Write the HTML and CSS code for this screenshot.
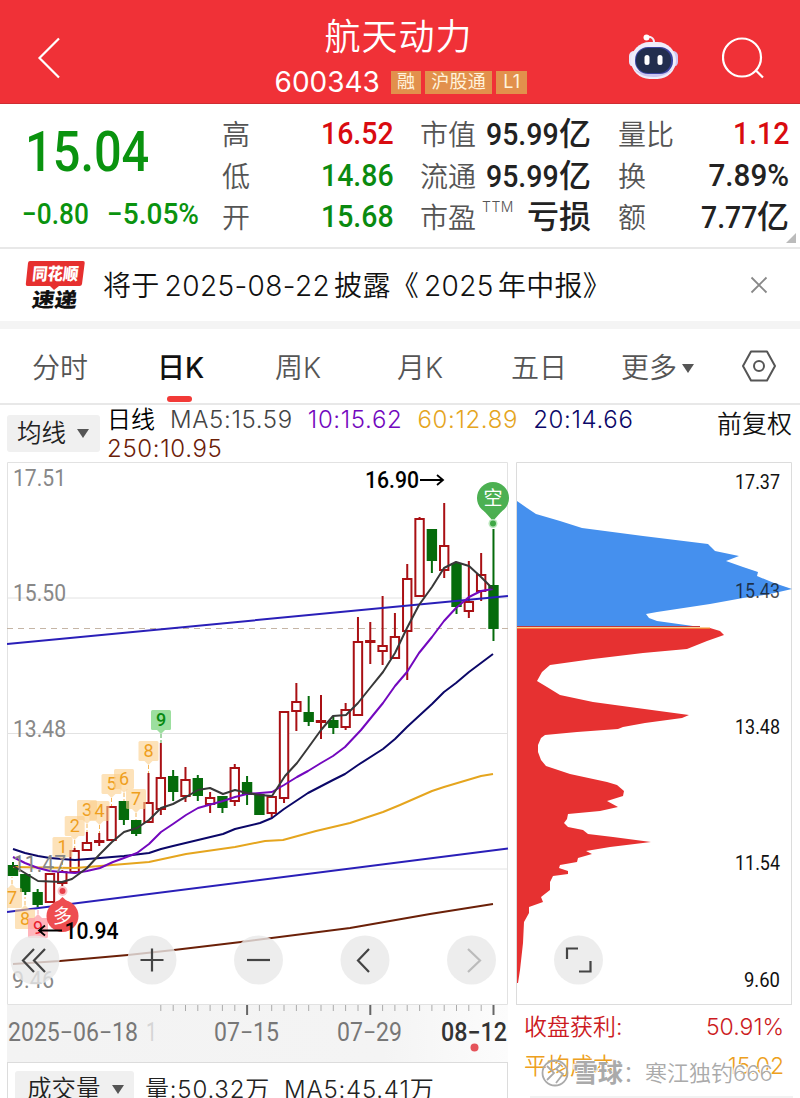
FILE: index.html
```html
<!DOCTYPE html>
<html lang="zh-CN">
<head>
<meta charset="utf-8">
<title>航天动力 600343</title>
<link rel="stylesheet" href="styles.css">
</head>
<body>
<header class="header">
<svg class="back" width="24" height="42" viewBox="0 0 24 42"><path d="M22 1.500L2.500 21L22 40.500"/></svg>
<div class="stock">
<h1>航天动力</h1>
<div class="code-row"><span class="code">600343</span><span class="tag">融</span><span class="tag">沪股通</span><span class="tag tag-l1">L1</span></div>
</div>
<div class="header-icons">
<svg width="50" height="46" viewBox="0 0 50 46">
<path d="M17 3.500C21 1.500 25 4 25 8" fill="none" stroke="#f3eefa" stroke-width="2"/>
<circle cx="17.500" cy="3.500" r="3" fill="#fff"/>
<rect x="0" y="17" width="10" height="16" rx="5" fill="#e9e5f8"/>
<rect x="39" y="17" width="10" height="16" rx="5" fill="#cfc6f3"/>
<rect x="2" y="8" width="45" height="37" rx="18.500" fill="#f0edfa"/>
<path d="M5 34C10 45 36 47 44 34C38 42 12 42 5 34Z" fill="#cdc5f0"/>
<rect x="6" y="13" width="38" height="27" rx="13" fill="#3c43a0"/>
<rect x="7" y="14" width="35" height="25" rx="12" fill="#222e4e"/>
<rect x="15.500" y="21" width="5" height="10" rx="2.500" fill="#fff"/>
<rect x="28.500" y="21" width="5" height="10" rx="2.500" fill="#fff"/>
</svg>
<svg width="43" height="44" viewBox="0 0 43 44" fill="none" stroke="#fff" stroke-width="2.200"><circle cx="20" cy="20.500" r="19"/><path d="M33.500 33L41 40.500"/></svg>
</div>
</header>

<section class="quote">
<div class="price-box">
<div class="price"><span class="num">15.04</span></div>
<div class="change"><span class="num">−0.80</span><span class="num">−5.05%</span></div>
</div>
<dl class="stats">
<div><dt>高</dt><dd class="num up">16.52</dd></div>
<div><dt>低</dt><dd class="num down">14.86</dd></div>
<div><dt>开</dt><dd class="num down">15.68</dd></div>
</dl>
<dl class="stats">
<div><dt>市值</dt><dd><span class="num">95.99</span>亿</dd></div>
<div><dt>流通</dt><dd><span class="num">95.99</span>亿</dd></div>
<div><dt>市盈<sup>TTM</sup></dt><dd>亏损</dd></div>
</dl>
<dl class="stats">
<div><dt>量比</dt><dd class="num up">1.12</dd></div>
<div><dt>换</dt><dd class="num percent">7.89%</dd></div>
<div><dt>额</dt><dd><span class="num">7.77</span>亿</dd></div>
</dl>
<span class="corner"></span>
</section>

<section class="news">
<svg class="logo" width="62" height="52" viewBox="0 0 62 52">
<path d="M5 2H58Q60 2 59.700 4L57 25Q56.700 27 54.500 27H34L29 31L25 27H2.500Q.500 27 .800 25L3 4Q3.300 2 5 2Z" fill="#e6302f"/>
<text x="7" y="21" textLength="46" lengthAdjust="spacingAndGlyphs" class="logo-top" transform="skewX(-6) translate(2 0)">同花顺</text>
<text x="8" y="48" textLength="45" lengthAdjust="spacingAndGlyphs" class="logo-bottom" transform="skewX(-8) translate(5 0)">速递</text>
</svg>
<p>将于<span>2025-08-22</span>披露《<span>2025</span>年中报》</p>
<svg class="close" width="18" height="18" viewBox="0 0 18 18"><path d="M1.500 1.500L16.500 16.500M16.500 1.500L1.500 16.500"/></svg>
</section>

<nav class="tabs">
<span>分时</span>
<span class="active">日K</span>
<span>周K</span>
<span>月K</span>
<span>五日</span>
<span class="more">更多<i class="caret"></i></span>
<svg width="36" height="34" viewBox="0 0 36 34" fill="none" stroke="#555" stroke-width="2"><path d="M10 2.500H26L34 17L26 31.500H10L2 17Z" stroke-linejoin="round"/><circle cx="18" cy="17" r="5"/></svg>
</nav>

<section class="ma-bar">
<div class="select">均线<i class="caret"></i></div>
<div class="ma-list">
<span class="ma-day">日线</span><span class="ma5">MA5:15.59</span><span class="ma10">10:15.62</span><span class="ma60">60:12.89</span><span class="ma20">20:14.66</span><br>
<span class="ma250">250:10.95</span>
</div>
<div class="adjust">前复权</div>
</section>

<main class="board">
<div class="left">
<svg class="kline" width="502" height="543" viewBox="7 462 502 543">
<g class="grid"><path d="M7 598H508M7 733.500H508M7 869H508"/><path class="frame" d="M7.500 462.500H507.500V1004.500H7.500Z"/></g>
<path class="last-price" d="M7 628.500H508"/>
<g id="candles"></g>
<g class="lines">
<path stroke="#2a1fb8" d="M7 644L508 596M7 912L508 848.500"/>
<polyline stroke="#6b2008" points="13,964 60,961 128,955 174,950 241,942 350,928 430,914 493,904"/>
<polyline stroke="#e5a51e" points="13,867 75,868 100,866 149,862 186,854 200,852 235,847 265,841 283,840 316,831 350,823 383,812 400,805 432,791 444,787 481,776 493,774"/>
<polyline stroke="#0b0768" points="13,849 25,853 38,856 50,858 62,859 75,860 100,858 124,856 149,853 161,849 173,846 198,840 223,834 235,829 260,823 272,818 284,809 308,793 333,780 345,774 358,765 383,749 395,739 407,727 420,715 432,704 444,692 456,683 469,672 493,654"/>
<polyline stroke="#7308be" points="13,857 25,863 38,868 50,871 62,872 75,873 87,871 100,868 113,862 124,858 137,853 149,844 161,832 173,824 186,815 198,808 223,801 235,797 247,794 260,793 272,792 284,785 297,777 308,771 321,763 333,756 345,747 361,730 383,703 395,686 407,672 419,653 432,637 444,621 456,608 469,597 481,591 493,589"/>
<polyline stroke="#383838" points="13,866 20,870 38,881 62,882 72,879 87,868 100,854 112,842 124,832 137,828 149,820 161,808 173,804 186,797 198,790 210,788 223,794 235,790 247,793 260,795 272,796 285,776 297,763 308,748 321,730 333,716 346,715 358,703 370,688 383,672 395,653 407,628 419,605 432,587 444,568 456,562 469,566 481,577 493,589"/>
</g>
<g id="marks"></g>
<g class="dk">
<path d="M493 521L484 511H502Z" fill="#4cae50"/><circle cx="493" cy="498" r="16" fill="#4cb052"/>
<text x="493" y="505">空</text>
<circle cx="493" cy="523.500" r="4.500" fill="#b9e6bb"/><circle cx="493" cy="523.500" r="3" fill="#3fa845"/>
<circle cx="62.500" cy="891" r="5" fill="#fbc4c8"/><circle cx="62.500" cy="891" r="3" fill="#e8404b"/>
<path d="M62.500 897L54 905H71Z" fill="#ee4d50"/><circle cx="62.500" cy="916" r="16" fill="#ee4d50"/>
<text x="62.500" y="923">多</text>
</g>
<g class="axis-price">
<text x="13" y="486" textLength="53" lengthAdjust="spacingAndGlyphs">17.51</text>
<text x="13" y="601" textLength="53" lengthAdjust="spacingAndGlyphs">15.50</text>
<text x="13" y="737" textLength="53" lengthAdjust="spacingAndGlyphs">13.48</text>
<text x="13" y="872" textLength="53" lengthAdjust="spacingAndGlyphs">11.47</text>
<text x="12" y="988" textLength="42" lengthAdjust="spacingAndGlyphs">9.46</text>
</g>
<g class="extreme">
<text x="365" y="488" textLength="54" lengthAdjust="spacingAndGlyphs">16.90</text><path d="M420 480H443M437 475L443 480L437 485"/>
<text x="64.500" y="939" textLength="54" lengthAdjust="spacingAndGlyphs">10.94</text><path d="M62 930.500H39M45 925.500L39 930.500L45 935.500"/>
</g>
<g class="tools">
<circle cx="35" cy="960" r="24.500"/><path d="M34 949L23 960.500L34 972M45 949L34 960.500L45 972"/>
<circle cx="152" cy="960" r="24.500"/><path d="M140.500 960H163.500M152 948.500V971.500"/>
<circle cx="258.500" cy="960" r="24.500"/><path d="M247 960H270"/>
<circle cx="365" cy="960" r="24.500"/><path d="M369 949L358 960.500L369 972"/>
<circle cx="471.500" cy="960" r="24.500"/><path d="M468 949L480 960.500L468 972" class="off"/>
</g>
</svg>
<svg class="dates" width="502" height="58" viewBox="7 1005 502 58">
<defs><linearGradient id="band"><stop offset="0" stop-color="#f3f3f3"/><stop offset=".75" stop-color="#f4f4f4"/><stop offset="1" stop-color="#fcfcfc"/></linearGradient></defs>
<rect x="7" y="1005" width="501" height="57" fill="url(#band)"/>
<path class="frame" d="M7 1062.500H508"/>
<g id="ticks"></g>
<text x="8" y="1041" textLength="130" lengthAdjust="spacingAndGlyphs">2025−06−18</text>
<text x="146" y="1041" textLength="11" lengthAdjust="spacingAndGlyphs" class="faded">1</text>
<text x="214" y="1041" textLength="65" lengthAdjust="spacingAndGlyphs">07−15</text>
<text x="337" y="1041" textLength="65" lengthAdjust="spacingAndGlyphs">07−29</text>
<text x="441" y="1041" textLength="66" lengthAdjust="spacingAndGlyphs" class="today">08−12</text>
<circle cx="474.500" cy="1047.500" r="4" fill="#e5535a"/>
</svg>
<div class="volume">
<div class="select">成交量<i class="caret"></i></div>
<span class="vol-now">量:50.32万</span><span class="vol-ma">MA5:45.41万</span>
</div>
</div>

<div class="right">
<svg class="chips" width="277" height="543" viewBox="516 462 277 543">
<path class="frame" d="M516.500 1004V462.500H791.500V1004"/><path class="frame" d="M516 1004.500H792"/>
<polygon fill="#4590ee" points="517,501 527,508 536,514 560,521 582,528 643,536 708,544 711,547 715,551 739,556 726,561 743,567 758,572 757,576 774,583 792,589 770,594 743,598 710,604 657,612 646,614 649,618 657,621 700,627 517,627"/>
<polygon fill="#e63131" points="517,628 710,628 720,631 724,635 707,641 687,649 643,653 593,659 550,665 542,672 537,681 547,687 560,695 593,702 637,708 689,715 682,718 645,723 623,727 618,729 577,732 545,735 541,738 538,745 538,752 541,760 546,766 570,774 607,782 617,785 624,791 623,796 607,801 618,807 600,811 568,814 567,819 564,823 568,827 583,830 588,834 613,837 651,842 610,847 586,851 592,854 578,858 577,862 560,865 559,868 568,871 568,874 553,876 550,882 550,890 541,897 543,902 529,907 529,913 524,922 523,943 520,970 518,983 517,983"/>
<path d="M517 626.500H700" stroke="#c43a3a"/><path d="M517 628.200H710" stroke="#f79a35" stroke-width="1.300"/>
<g class="chip-price">
<text x="735" y="489" textLength="45" lengthAdjust="spacingAndGlyphs">17.37</text>
<text x="735" y="598" textLength="45" lengthAdjust="spacingAndGlyphs" fill-opacity=".75">15.43</text>
<text x="735" y="734" textLength="45" lengthAdjust="spacingAndGlyphs">13.48</text>
<text x="735" y="870" textLength="45" lengthAdjust="spacingAndGlyphs">11.54</text>
<text x="744" y="987" textLength="36" lengthAdjust="spacingAndGlyphs">9.60</text>
</g>
<g class="tools"><circle cx="578.500" cy="960" r="24.500"/><path d="M567 959V948.500H578M579 971.500H590.500V961"/></g>
</svg>
<div class="chip-row profit"><span>收盘获利:</span><b>50.91%</b></div>
<div class="chip-row cost"><span>平均成本:</span><b>15.02</b></div>
<div class="chip-next"></div>
<div class="watermark"><svg width="28" height="28" viewBox="0 0 28 28" fill="none" stroke="#aaa" stroke-width="1.800"><circle cx="14" cy="14" r="12.500"/><path d="M6 7L13 14L6 21M20 5L15 10L22 15L15 24"/></svg><strong>雪球</strong>：寒江独钓666</div>
</div>
</main>

<script>
// [high, top, bottom, low, type]  r - up, g - down
const candles = [
    [862, 866, 875, 875, "g"], [875, 875, 891, 895, "g"], [889, 893, 904, 907, "g"],
    [873, 874, 902, 902, "r"], [870, 872, 883, 886, "r"], [848, 851, 872, 872, "r"],
    [832, 843, 850, 851, "r"], [833, 841, 842, 846, "r"], [806, 807, 840, 840, "r"],
    [801, 802, 819, 825, "g"], [821, 821, 833, 836, "g"], [773, 803, 822, 822, "r"],
    [743, 778, 809, 815, "r"], [770, 777, 791, 801, "g"], [767, 780, 796, 802, "r"],
    [775, 779, 795, 801, "g"], [792, 798, 804, 813, "r"], [797, 797, 807, 813, "g"],
    [764, 768, 801, 806, "r"], [776, 783, 794, 805, "g"], [795, 795, 814, 814, "g"],
    [797, 797, 813, 817, "r"], [711, 712, 798, 803, "r"], [683, 702, 711, 731, "r"],
    [696, 713, 721, 726, "g"], [695, 721, 722, 739, "r"], [717, 721, 727, 734, "g"],
    [703, 710, 727, 730, "r"], [617, 642, 715, 716, "r"], [622, 641, 642, 664, "r"],
    [596, 646, 651, 665, "r"], [613, 637, 658, 659, "r"], [564, 579, 631, 680, "r"],
    [517, 519, 596, 596, "r"], [529, 530, 560, 573, "g"], [503, 546, 570, 578, "r"],
    [563, 564, 606, 614, "g"], [561, 602, 611, 618, "r"], [553, 575, 591, 601, "r"],
    [529, 586, 628, 641, "g"]
];
const step = 12.32;
let html = "";
candles.forEach(([high, top, bottom, low, type], i) => {
    const x = 13 + i * step;
    html += `<path class="${type}" d="M${x} ${high}V${top}M${x} ${bottom}V${low}"/>`;
    html += `<rect class="${type}" x="${x - 4.2}" y="${top}" width="8.4" height="${bottom - top}"/>`;
});
document.getElementById("candles").innerHTML = html;

// x, y, text, class, where the stem ends
const marks = [
    [12, 898, "7", "o", 877], [25, 919, "8", "o", 897], [38, 928, "9", "p", 908],
    [62.5, 847, "1", "o", 868], [74.7, 826, "2", "o", 848], [87, 810, "3", "o", 832],
    [99.5, 811, "4", "o", 833], [111.5, 784, "5", "o", 806], [124, 779, "6", "o", 801],
    [136, 799, "7", "o", 820], [148.5, 751, "8", "o", 773], [161, 720, "9", "n", 743]
];
html = "";
marks.forEach(([x, y, text, cls, end]) => {
    const d = end > y ? 1 : -1;
    html += `<g class="${cls}"><rect x="${x - 10}" y="${y - 10}" width="20" height="20" rx="1.5"/>`;
    html += `<path class="tip" d="M${x - 4} ${y + 10 * d}L${x} ${y + 14 * d}L${x + 4} ${y + 10 * d}Z"/>`;
    html += `<path class="stem" d="M${x} ${y + 14 * d}V${end}"/><text x="${x}" y="${y + 6}">${text}</text></g>`;
});
document.getElementById("marks").innerHTML = html;

html = "";
for (let i = 12; i < 40; i++) {
    const big = i % 10 === 9;
    html += `<path class="${big ? "big" : "small"}" d="M${(13 + i * step).toFixed(1)} 1005V${big ? 1015 : 1011}"/>`;
}
document.getElementById("ticks").innerHTML = html;
</script>
</body>
</html>
```
FILE: styles.css
```css
* {
    box-sizing: border-box;
}
body {
    margin: 0;
    width: 800px;
    height: 1098px;
    overflow: hidden;
    background: #fff;
    color: #222;
    font-family: Inter, "Noto Sans CJK SC", sans-serif;
    font-weight: 350;
}
h1, p, dl, dd {
    margin: 0;
}
svg {
    display: block;
}
/* Шапка */
.header {
    height: 104px;
    background: #f03137;
    border-bottom: 1px solid #cf2d32;
    color: #fff;
    display: grid;
    grid-template-columns: 236px 330px 1fr;
}
.back {
    margin: 37px 0 0 37px;
    fill: none;
    stroke: #fff;
    stroke-width: 2.2;
}
.stock {
    text-align: center;
    padding-top: 15px;
}
h1 {
    font-size: 36px;
    line-height: 44px;
    font-weight: 350;
    letter-spacing: 1px;
    margin-right: 5px;
}
.code-row {
    display: flex;
    align-items: center;
    justify-content: center;
    gap: 4px;
    height: 46px;
}
.code {
    font-size: 28px;
    font-weight: 400;
    margin-right: 7px;
}
.tag {
    height: 23px;
    line-height: 22px;
    padding: 0 6px;
    font-size: 18px;
    letter-spacing: .3px;
    background: #e2904c;
    color: #fff3dc;
    font-weight: 400;
}
.tag-l1 {
    padding: 0 7px;
}
.header-icons {
    display: flex;
    align-items: flex-start;
    padding: 34px 0 0 63px;
    gap: 43px;
}
.header-icons svg + svg {
    margin-top: 3px;
}
/* Котировка */
.quote {
    position: relative;
    height: 145px;
    border-bottom: 2px solid #e8e8e8;
    display: grid;
    grid-template-columns: 195px 171px 171px 171px;
    column-gap: 27px;
    padding-top: 9px;
}
.num {
    display: inline-block;
    font-family: Roboto, sans-serif;
    font-weight: 500;
    transform: scaleX(.89);
    transform-origin: right;
}
.percent {
    transform: scaleX(.925);
}
.price-box {
    color: #0a930f;
    padding-left: 22px;
    white-space: nowrap;
}
.price-box .num {
    transform-origin: left;
}
.price {
    font-size: 56px;
    line-height: 66px;
    padding: 5px 0 0 3px;
}
.price .num {
    transform: scaleX(.87);
}
.change {
    display: flex;
    gap: 10px;
    font-size: 29.5px;
    line-height: 44px;
    padding-top: 7px;
}
.change .num + .num {
    transform: scaleX(.95);
}
.stats > div {
    display: flex;
    justify-content: space-between;
    height: 41.5px;
    line-height: 41.5px;
}
.stats:nth-child(2) > div {
    width: 172px;
}
dt {
    font-size: 28px;
    color: #555;
    white-space: nowrap;
    padding-top: 2px;
}
dd {
    font-size: 32px;
    font-weight: 500;
    white-space: nowrap;
}
sup {
    font-size: 14px;
    line-height: 0;
    vertical-align: 16px;
    margin-left: 6px;
    letter-spacing: .5px;
}
.up {
    color: #d90b10;
}
.down {
    color: #0a8a10;
}
.corner {
    position: absolute;
    right: 4px;
    bottom: 4px;
    border: 5px solid #bbb;
    border-top-color: transparent;
    border-left-color: transparent;
}
/* Новость */
.news {
    height: 80px;
    border-bottom: 8px solid #f4f4f4;
    display: flex;
    align-items: center;
    padding: 0 32px 0 25px;
}
.news p {
    margin: -2px 0 0 16px;
    font-size: 28px;
    letter-spacing: .3px;
    white-space: nowrap;
    color: #111;
}
.news p span {
    letter-spacing: .4px;
    margin: 0 4px 0 5px;
}
.close {
    margin-left: auto;
    stroke: #888;
    stroke-width: 1.8;
}
.logo-top {
    fill: #fff;
    font-size: 17px;
    font-weight: 900;
}
.logo-bottom {
    fill: #111;
    font-size: 20px;
    font-weight: 900;
}
/* Вкладки */
.tabs {
    height: 76px;
    border-bottom: 2px solid #e8e8e8;
    display: grid;
    grid-template-columns: 125px 118px 122px 114px 110px 120px 36px;
    align-items: center;
    padding-left: 32px;
    font-size: 28px;
    color: #555;
    white-space: nowrap;
}
.tabs .active {
    position: relative;
    color: #111;
    font-weight: 500;
}
.tabs .active::after {
    content: "";
    position: absolute;
    left: 10px;
    bottom: -16px;
    width: 25px;
    height: 6px;
    border-radius: 3px;
    background: #f23a37;
}
.caret {
    display: inline-block;
    border: 6.5px solid transparent;
    border-top: 9px solid #555;
    border-bottom: 0;
    vertical-align: 5px;
    margin-left: 5px;
}
/* Средние */
.ma-bar {
    height: 57px;
    display: flex;
    padding-left: 7px;
}
.select {
    height: 37px;
    line-height: 37px;
    background: #f0f0f0;
    border-radius: 3px;
    font-size: 24.5px;
    white-space: nowrap;
}
.select .caret {
    margin-left: 11px;
    vertical-align: 4px;
}
.ma-bar .select {
    width: 93px;
    margin-top: 10px;
    padding-left: 10px;
}
.ma-list {
    padding-left: 7px;
    font-size: 24px;
    line-height: 29px;
    white-space: nowrap;
}
.ma-list span {
    margin-right: 15px;
    letter-spacing: .65px;
}
.ma-list .ma-day {
    color: #000;
    letter-spacing: 0;
}
.ma5 { color: #444; }
.ma10 { color: #7308be; }
.ma60 { color: #e5a51e; }
.ma20 { color: #0b0768; }
.ma250 { color: #6b2008; }
.adjust {
    margin: 1px 8px 0 auto;
    font-size: 25px;
    line-height: 37px;
    color: #111;
}
/* Графики */
.board {
    display: grid;
    grid-template-columns: 502px 277px;
    column-gap: 7px;
    padding-left: 7px;
}
.grid path {
    stroke: #e2e2e2;
    fill: none;
}
.frame {
    fill: none;
    stroke: #dcdcdc;
}
.last-price {
    stroke: #c5b5a5;
    stroke-dasharray: 6 5;
}
#candles .r {
    stroke: #a91014;
    stroke-width: 2;
    fill: #fff;
}
#candles .g {
    stroke: #056b0b;
    stroke-width: 2;
    fill: #056b0b;
}
.lines {
    fill: none;
    stroke-width: 2;
    stroke-linejoin: round;
}
#marks text {
    font: 400 18px Roboto, sans-serif;
    text-anchor: middle;
}
#marks .stem {
    stroke-dasharray: 4 2;
}
.o rect, .o .tip { fill: #fbcf8a; fill-opacity: .6; }
.o text { fill: #ef9f1e; }
.o .stem { stroke: #f4b65a; }
.p rect, .p .tip { fill: #ff9ca6; fill-opacity: .75; }
.p text { fill: #e8202c; }
.p .stem { stroke: #f7a0a8; }
.n rect, .n .tip { fill: #9cdf9f; }
#marks .n text { fill: #078a12; font-weight: 500; }
.n .stem { stroke: #4cae50; }
.dk text {
    font-size: 19px;
    font-weight: 400;
    fill: #fff;
    text-anchor: middle;
}
.axis-price text {
    font: 400 24px Roboto, sans-serif;
    fill: #888;
}
.extreme text {
    font: 500 24px Roboto, sans-serif;
    fill: #000;
}
.extreme path {
    fill: none;
    stroke: #000;
    stroke-width: 1.8;
}
.tools circle {
    fill: #e9e9e9;
    fill-opacity: .8;
}
.tools path {
    fill: none;
    stroke: #444;
    stroke-width: 2.2;
}
.tools .off {
    stroke: #bbb;
}
.dates text {
    font: 400 25px Roboto, sans-serif;
    fill: #777;
}
.dates .faded {
    fill: #d5d5d5;
}
.dates .today {
    fill: #333;
    font-weight: 500;
}
#ticks .small { stroke: #aaa; }
#ticks .big {
    stroke: #666;
    stroke-width: 2;
}
.volume {
    height: 36px;
    display: flex;
    border-left: 1px solid #dcdcdc;
    border-right: 1px solid #dcdcdc;
    margin-right: 1px;
    padding: 8px 0 0 7px;
    font-size: 24px;
    letter-spacing: .8px;
    line-height: 37px;
    white-space: nowrap;
}
.volume .select {
    width: 119px;
    padding-left: 12px;
    margin-right: 11px;
    letter-spacing: 0;
}
.vol-ma {
    margin-left: 14px;
}
.right {
    position: relative;
}
.chip-price text {
    font: 400 21px Roboto, sans-serif;
    fill: #111;
}
.chip-row {
    display: flex;
    justify-content: space-between;
    height: 39px;
    line-height: 44px;
    padding: 0 9px 0 8px;
    font-size: 23px;
}
.chip-row b {
    font-weight: 350;
}
.profit { color: #cc1a22; }
.cost { color: #eda020; }
.chip-next {
    height: 10px;
    margin: 13px 0 0 14px;
    background: #f2f2f2;
}
.watermark {
    position: absolute;
    left: 25px;
    top: 597px;
    display: flex;
    align-items: center;
    font-size: 22px;
    line-height: 28px;
    white-space: nowrap;
    color: #aaa;
    text-shadow: 1px 1px 0 #fff, -1px -1px 0 #fff;
}
.watermark strong {
    font-weight: 700;
    font-size: 25px;
    margin-left: 4px;
}
```
